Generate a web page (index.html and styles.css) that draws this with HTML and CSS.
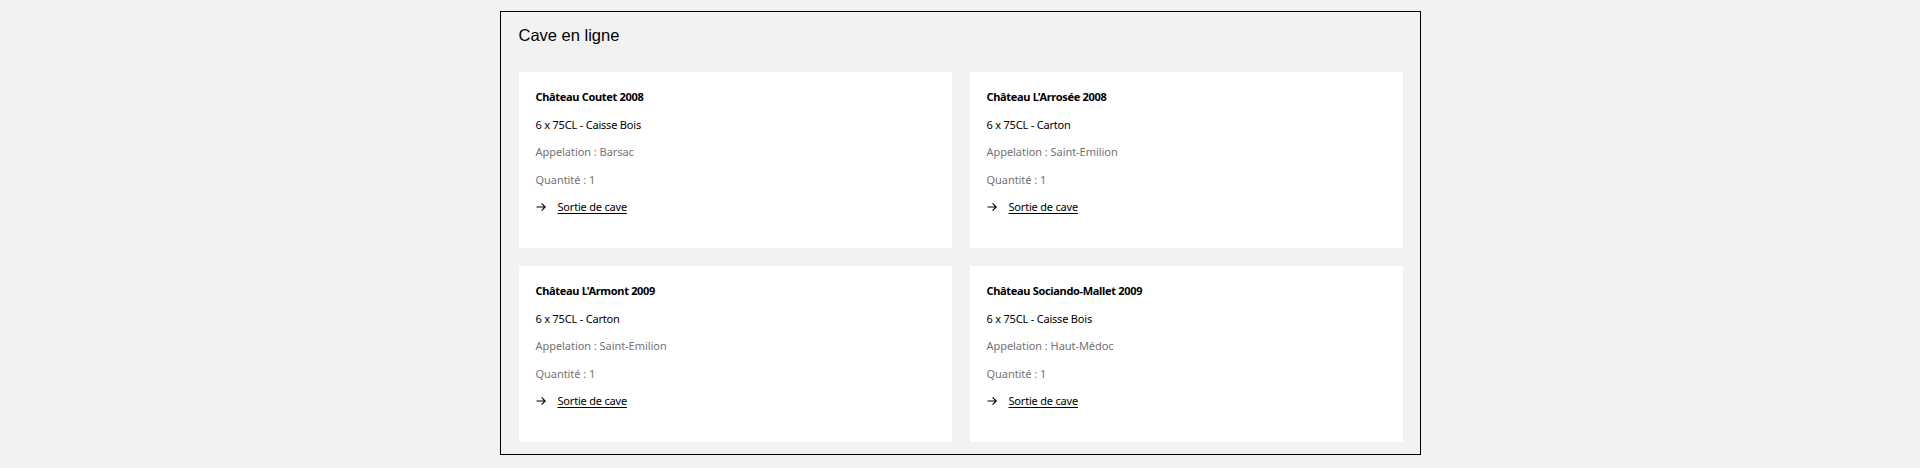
FILE: index.html
```html
<!DOCTYPE html>
<html lang="fr">
<head>
<meta charset="utf-8">
<title>Cave en ligne</title>
<link rel="stylesheet" href="styles.css">
</head>
<body>
<section class="cave">
  <h2 class="cave-title">Cave en ligne</h2>
  <div class="cave-grid">
    <article class="wine">
      <p class="wine-name">Château Coutet 2008</p>
      <p class="wine-pack">6 x 75CL - Caisse Bois</p>
      <p class="wine-meta">Appelation : Barsac</p>
      <p class="wine-meta">Quantité : 1</p>
      <p class="wine-action"><svg class="arrow" viewBox="0 0 10 10" width="10" height="10"><path d="M0.5 5H9.2M5.6 1.4L9.2 5L5.6 8.6" fill="none" stroke="#000" stroke-width="1.1"/></svg><a href="#" class="wine-link">Sortie de cave</a></p>
    </article>
    <article class="wine">
      <p class="wine-name">Château L'Arrosée 2008</p>
      <p class="wine-pack">6 x 75CL - Carton</p>
      <p class="wine-meta">Appelation : Saint-Emilion</p>
      <p class="wine-meta">Quantité : 1</p>
      <p class="wine-action"><svg class="arrow" viewBox="0 0 10 10" width="10" height="10"><path d="M0.5 5H9.2M5.6 1.4L9.2 5L5.6 8.6" fill="none" stroke="#000" stroke-width="1.1"/></svg><a href="#" class="wine-link">Sortie de cave</a></p>
    </article>
    <article class="wine">
      <p class="wine-name">Château L'Armont 2009</p>
      <p class="wine-pack">6 x 75CL - Carton</p>
      <p class="wine-meta">Appelation : Saint-Emilion</p>
      <p class="wine-meta">Quantité : 1</p>
      <p class="wine-action"><svg class="arrow" viewBox="0 0 10 10" width="10" height="10"><path d="M0.5 5H9.2M5.6 1.4L9.2 5L5.6 8.6" fill="none" stroke="#000" stroke-width="1.1"/></svg><a href="#" class="wine-link">Sortie de cave</a></p>
    </article>
    <article class="wine">
      <p class="wine-name">Château Sociando-Mallet 2009</p>
      <p class="wine-pack">6 x 75CL - Caisse Bois</p>
      <p class="wine-meta">Appelation : Haut-Médoc</p>
      <p class="wine-meta">Quantité : 1</p>
      <p class="wine-action"><svg class="arrow" viewBox="0 0 10 10" width="10" height="10"><path d="M0.5 5H9.2M5.6 1.4L9.2 5L5.6 8.6" fill="none" stroke="#000" stroke-width="1.1"/></svg><a href="#" class="wine-link">Sortie de cave</a></p>
    </article>
  </div>
</section>
</body>
</html>
```

FILE: styles.css
```css
html, body {
  margin: 0;
  padding: 0;
  background: #f2f2f2;
}

body {
  padding-top: 11px;
  font-family: "Noto Sans", "Open Sans", sans-serif;
}

.cave {
  box-sizing: border-box;
  width: 921px;
  margin: 0 auto;
  border: 1px solid #000;
  padding: 13px 17px 12px 18px;
}

.cave-title {
  margin: 0 0 27px;
  font-family: "Liberation Sans", Arial, sans-serif;
  font-weight: normal;
  font-size: 16.5px;
  line-height: 20px;
  color: #000;
}

.cave-grid {
  display: grid;
  grid-template-columns: 1fr 1fr;
  gap: 18px;
}

.wine {
  background: #fff;
  height: 176px;
  box-sizing: border-box;
  padding: 16px 17px 0;
  display: flex;
  flex-direction: column;
  gap: 9.5px;
}

.wine p {
  margin: 0;
  font-size: 11px;
  line-height: 18px;
  letter-spacing: -0.2px;
  color: #000;
}

.wine .wine-name {
  font-weight: bold;
  letter-spacing: -0.32px;
}

.wine .wine-meta {
  color: #737373;
  letter-spacing: -0.05px;
}

.wine-action {
  display: flex;
  align-items: center;
  gap: 12px;
}

.arrow {
  display: block;
}

.wine-link {
  color: #000;
  text-decoration: underline;
  text-underline-offset: 2px;
}
```
